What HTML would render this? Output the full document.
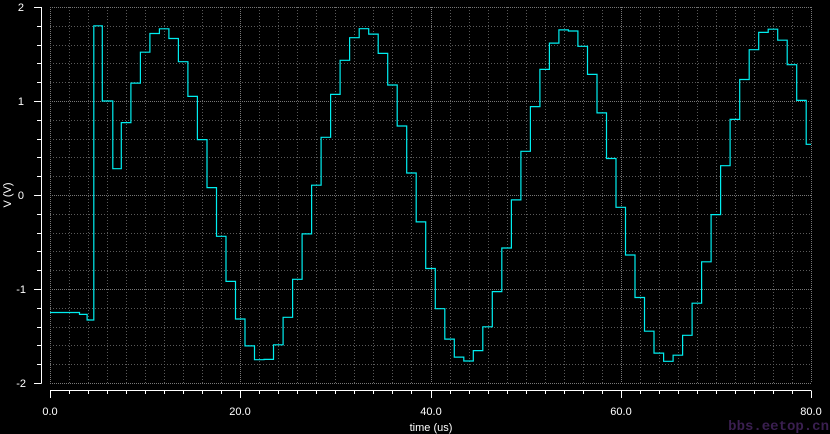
<!DOCTYPE html>
<html><head><meta charset="utf-8"><style>
html,body{margin:0;padding:0;background:#000;width:830px;height:434px;overflow:hidden}
svg{display:block}
text{font-family:"Liberation Sans",sans-serif;font-size:11px;fill:#fff}
</style></head><body>
<svg id="s" width="830" height="434" xmlns="http://www.w3.org/2000/svg">
<g id="grid" stroke="#5a5a5a" stroke-width="1" stroke-dasharray="1,2"></g>
<g id="axes" stroke="#fff" stroke-width="1" fill="none"></g>
<path id="wave" fill="none" stroke="#00eef0" stroke-width="1.2"/>
<text x="24" y="11" text-anchor="end">2</text>
<text x="24" y="105" text-anchor="end">1</text>
<text x="24" y="199" text-anchor="end">0</text>
<text x="26" y="293" text-anchor="end">-1</text>
<text x="26" y="387" text-anchor="end">-2</text>
<text transform="translate(11,195) rotate(-90)" text-anchor="middle">V (V)</text>
<text x="50" y="415" text-anchor="middle">0.0</text>
<text x="240" y="415" text-anchor="middle">20.0</text>
<text x="431" y="415" text-anchor="middle">40.0</text>
<text x="621" y="415" text-anchor="middle">60.0</text>
<text x="811" y="415" text-anchor="middle">80.0</text>
<text x="431" y="431" text-anchor="middle">time (us)</text>
<text x="829" y="430" text-anchor="end" style="font-weight:bold;font-size:14px;fill:#3a1f50;font-family:'Liberation Mono',monospace">bbs.eetop.cn</text>
</svg>
<script>
var X=function(t){return 50+t*761/80},Y=function(v){return 195-v*94};
var g=document.getElementById('grid'),a=document.getElementById('axes'),h='',k='';
for(var i=0;i<=40;i++){var x=Math.round(50+i*761/40)+0.5;h+='<line x1="'+x+'" y1="7" x2="'+x+'" y2="383"'+(i%10==0?' stroke="#777" stroke-dasharray="1,1"':'')+'/>';
 k+='<line x1="'+x+'" y1="390.5" x2="'+x+'" y2="'+(i%10==0?398:394)+'"/>';}
for(var j=0;j<=20;j++){var y=Math.round(7+j*376/20)+0.5;h+='<line x1="50" y1="'+y+'" x2="811" y2="'+y+'"'+(j%5==0?' stroke="#777" stroke-dasharray="1,1"':'')+'/>';
 k+='<line x1="'+(j%5==0?34:37)+'" y1="'+y+'" x2="41.5" y2="'+y+'"/>';}
k+='<line x1="41.5" y1="7" x2="41.5" y2="383.5"/><line x1="50" y1="390.5" x2="811" y2="390.5"/>';
g.innerHTML=h;a.innerHTML=k;
var pts=[[0,-1.25],[3.1,-1.27],[3.9,-1.33],[4.6,1.8],[5.5,1.0],[6.6,0.28],[7.5,0.77]];
var T=21.3,t0=6.5;
for(var t=8.5;t<80;t+=1){pts.push([t,1.77*Math.sin(2*Math.PI*(t+0.5-t0)/T)]);}
var d='M'+X(0)+' '+Y(pts[0][1]);
for(var n=1;n<pts.length;n++){var xx=X(pts[n][0]).toFixed(1);d+=' H'+xx+' V'+Y(pts[n][1]).toFixed(1);}
d+=' H'+X(80);
document.getElementById('wave').setAttribute('d',d);
</script>
</body></html>
